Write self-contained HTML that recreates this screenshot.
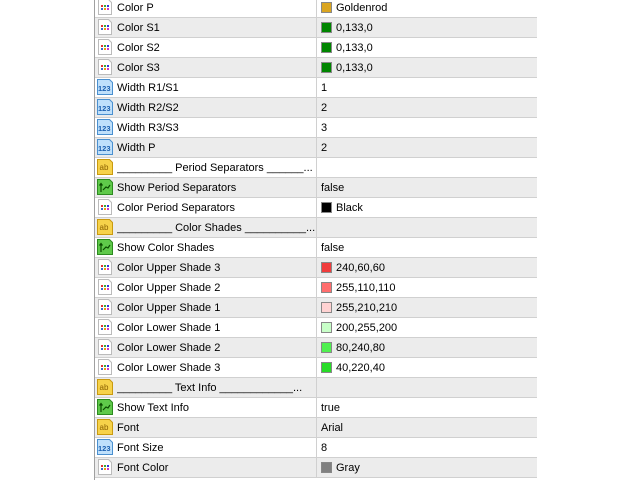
<!DOCTYPE html>
<html><head><style>
body{margin:0;width:640px;height:480px;overflow:hidden;background:#fff;font-family:"Liberation Sans",sans-serif;font-size:11px;color:#000;position:relative}
.vl{position:absolute;left:94px;top:0;width:1px;height:480px;background:#a0a0a0}
.r{position:absolute;left:95px;width:442px;height:19px;border-bottom:1px solid #d0d0d0}
.r.g{background:#ececec}
.c{position:absolute;left:221px;top:0;width:1px;height:20px;background:#d0d0d0}
.n{position:absolute;left:22px;top:4px;white-space:nowrap;width:198px;overflow:hidden}
.v{position:absolute;left:226px;top:4px;white-space:nowrap}
.sw{display:inline-block;border:1px solid #888;vertical-align:-2px;margin-right:4px;box-sizing:border-box;width:11px;height:11px}
.ic{position:absolute;left:2px;top:1px;width:16px;height:16px}
</style></head><body>
<div class="vl"></div>
<svg width="0" height="0" style="position:absolute"><defs>
<g id="col"><path d="M1.5 .5h10l3 3v12h-13z" fill="#fff" stroke="#bbb"/><rect x="4" y="6" width="2" height="2" fill="#d33"/><rect x="7" y="6" width="2" height="2" fill="#3a3"/><rect x="10" y="6" width="2" height="2" fill="#33d"/><rect x="4" y="9" width="2" height="2" fill="#36c"/><rect x="7" y="9" width="2" height="2" fill="#e90"/><rect x="10" y="9" width="2" height="2" fill="#c3c"/></g>
<g id="num"><path d="M.5 .5h12l3 3v12H.5z" fill="#bfe0fb" stroke="#4a90d0"/><text x="1" y="12" font-family="Liberation Sans" font-size="7.5" fill="#1a5fb0" font-weight="bold">123</text></g>
<g id="ab"><path d="M.5 .5h12l3 3v12H.5z" fill="#f6d24a" stroke="#c99a10"/><text x="2.5" y="11" font-family="Liberation Sans" font-size="8" fill="#8a6000">ab</text></g>
<g id="bo"><path d="M.5 .5h12l3 3v12H.5z" fill="#5fc94a" stroke="#2d8a20"/><path d="M4 13V5M2.5 6.5L4 4.5 5.5 6.5M6 11l3-3 2 1 2-3" stroke="#0a4a00" fill="none" stroke-width="1.2"/></g>
</defs></svg>
<div id="t"></div>
<script>
var rows=[["col","Color P","Goldenrod","#daa520"],["col","Color S1","0,133,0","#008500"],["col","Color S2","0,133,0","#008500"],["col","Color S3","0,133,0","#008500"],["num","Width R1/S1","1"],["num","Width R2/S2","2"],["num","Width R3/S3","3"],["num","Width P","2"],["ab","_________ Period Separators ______...",""],["bo","Show Period Separators","false"],["col","Color Period Separators","Black","#000"],["ab","_________ Color Shades __________...",""],["bo","Show Color Shades","false"],["col","Color Upper Shade 3","240,60,60","#f03c3c"],["col","Color Upper Shade 2","255,110,110","#ff6e6e"],["col","Color Upper Shade 1","255,210,210","#ffd2d2"],["col","Color Lower Shade 1","200,255,200","#c8ffc8"],["col","Color Lower Shade 2","80,240,80","#50f050"],["col","Color Lower Shade 3","40,220,40","#28dc28"],["ab","_________ Text Info ____________...",""],["bo","Show Text Info","true"],["ab","Font","Arial"],["num","Font Size","8"],["col","Font Color","Gray","#808080"]];
var h="";rows.forEach(function(r,i){h+='<div class="r'+(i%2?' g':'')+'" style="top:'+(20*i-2)+'px"><svg class="ic" viewBox="0 0 16 16"><use href="#'+r[0]+'"/></svg><div class="n">'+r[1]+'</div><div class="c"></div><div class="v">'+(r[3]?'<span class="sw" style="background:'+r[3]+'"></span>':'')+r[2]+'</div></div>';});
document.getElementById("t").innerHTML=h;
</script>
</body></html>
